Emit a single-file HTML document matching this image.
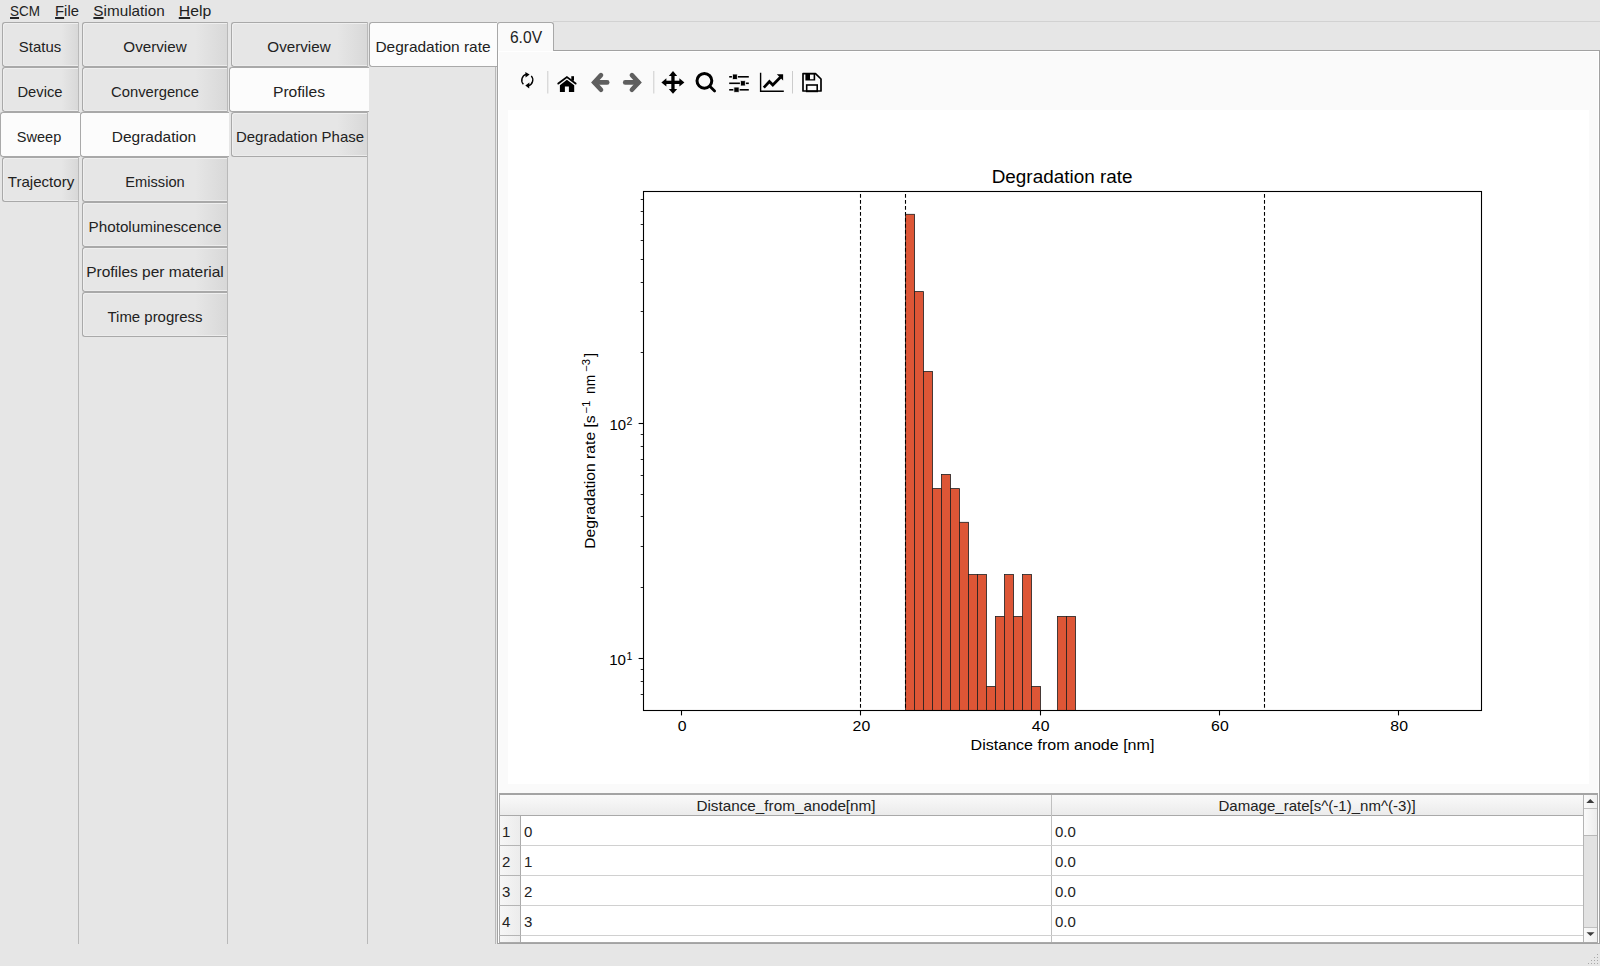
<!DOCTYPE html>
<html><head><meta charset="utf-8">
<style>
*{box-sizing:border-box;margin:0;padding:0}
html,body{width:1600px;height:966px;overflow:hidden;background:#e6e6e6;font-family:"Liberation Sans",sans-serif;color:#222}
.a{position:absolute}
.menu{top:0;left:0;width:1600px;height:22px;font-size:15.5px}
.menu u{text-decoration:underline;text-decoration-thickness:1.5px;text-underline-offset:1px}
.vline{position:absolute;width:1px;background:#b9b9b9}
.tab{position:absolute;height:45px;border:1px solid #a9a9a9;border-right:none;border-radius:3px 0 0 3px;
 background:linear-gradient(to right,#e6e6e6 0%,#e6e6e6 78%,#d8d8d8 100%);
 box-shadow:inset 1px 1px 0 #efefef, inset 0 -1px 0 #ececec}
.lbl{position:absolute;font-size:15px;line-height:15px;white-space:nowrap;transform-origin:50% 50%}
.tab.sel{background:#fcfcfc;box-shadow:none}
</style></head><body>
<div class="a menu">
 <div class="lbl" style="left:25.25px;top:3.3px;transform:translateX(-50%) scaleX(0.8984)"><u>S</u>CM</div>
 <div class="lbl" style="left:67px;top:3.3px;transform:translateX(-50%) scaleX(0.9856)"><u>F</u>ile</div>
 <div class="lbl" style="left:128.95px;top:3.3px;transform:translateX(-50%) scaleX(1.0173)"><u>S</u>imulation</div>
 <div class="lbl" style="left:195px;top:3.3px;transform:translateX(-50%) scaleX(1.0506)"><u>H</u>elp</div>
</div>

<!-- column pane borders -->
<div class="vline" style="left:78px;top:22px;height:922px"></div>
<div class="vline" style="left:227px;top:22px;height:922px"></div>
<div class="vline" style="left:367px;top:22px;height:922px"></div>
<div class="vline" style="left:495px;top:66px;height:878px"></div>
<div class="vline" style="left:495px;top:23px;height:43px;background:#e2e2e2"></div>

<!-- tabs -->
<div class="tab" style="left:2px;top:22px;width:76px"></div>
<div class="lbl" style="left:40.00px;top:39.2px;transform:translateX(-50%) scaleX(0.9947)">Status</div>
<div class="tab" style="left:2px;top:67px;width:76px"></div>
<div class="lbl" style="left:40.10px;top:84.2px;transform:translateX(-50%) scaleX(0.983)">Device</div>
<div class="tab" style="left:2px;top:157px;width:76px"></div>
<div class="lbl" style="left:41.00px;top:174.2px;transform:translateX(-50%) scaleX(1.0057)">Trajectory</div>
<div class="tab" style="left:82px;top:22px;width:145px"></div>
<div class="lbl" style="left:155.00px;top:39.2px;transform:translateX(-50%) scaleX(1.0131)">Overview</div>
<div class="tab" style="left:82px;top:67px;width:145px"></div>
<div class="lbl" style="left:155.00px;top:84.2px;transform:translateX(-50%) scaleX(0.9845)">Convergence</div>
<div class="tab" style="left:82px;top:157px;width:145px"></div>
<div class="lbl" style="left:155.25px;top:174.2px;transform:translateX(-50%) scaleX(0.9747)">Emission</div>
<div class="tab" style="left:82px;top:202px;width:145px"></div>
<div class="lbl" style="left:155.00px;top:219.2px;transform:translateX(-50%) scaleX(1.0149)">Photoluminescence</div>
<div class="tab" style="left:82px;top:247px;width:145px"></div>
<div class="lbl" style="left:155.10px;top:264.2px;transform:translateX(-50%) scaleX(1.0318)">Profiles per material</div>
<div class="tab" style="left:82px;top:292px;width:145px"></div>
<div class="lbl" style="left:154.75px;top:309.2px;transform:translateX(-50%) scaleX(0.9968)">Time progress</div>
<div class="tab" style="left:231px;top:22px;width:136px"></div>
<div class="lbl" style="left:299.00px;top:39.2px;transform:translateX(-50%) scaleX(1.0131)">Overview</div>
<div class="tab" style="left:231px;top:112px;width:136px"></div>
<div class="lbl" style="left:299.60px;top:129.2px;transform:translateX(-50%) scaleX(0.9974)">Degradation Phase</div>
<div class="tab sel" style="left:0px;top:112px;width:80px"></div>
<div class="lbl" style="left:38.95px;top:129.2px;transform:translateX(-50%) scaleX(0.9688)">Sweep</div>
<div class="tab sel" style="left:80px;top:112px;width:149px"></div>
<div class="lbl" style="left:154.00px;top:129.2px;transform:translateX(-50%) scaleX(1.0326)">Degradation</div>
<div class="tab sel" style="left:229px;top:67px;width:140px"></div>
<div class="lbl" style="left:298.50px;top:84.2px;transform:translateX(-50%) scaleX(1.0409)">Profiles</div>
<div class="tab sel" style="left:369px;top:22px;width:128px"></div>
<div class="lbl" style="left:432.60px;top:39.2px;transform:translateX(-50%) scaleX(1.0308)">Degradation rate</div>

<!-- 6.0V tab widget -->
<div class="a" style="left:553px;top:21px;width:1047px;height:1px;background:#d2d2d2"></div>
<div class="a" id="pane" style="left:497px;top:50px;width:1103px;height:894px;background:#fafafa;border:1px solid #a2a2a2;box-shadow:inset 1px 1px 0 #fff, inset -1px 0 0 #fff"></div>
<div class="a" style="left:497px;top:22px;width:57px;height:29px;background:#fafafa;border:1px solid #a8a8a8;border-bottom:none;border-radius:3px 3px 0 0"></div>
<div class="lbl" style="left:525.6px;top:29.6px;font-size:16.8px;transform:translateX(-50%) scaleX(0.93)">6.0V</div>


<!-- toolbar -->
<svg class="a" style="left:0;top:0" width="1600" height="110" viewBox="0 0 1600 110">
<g fill="none" stroke="#000" stroke-width="1.4">
 <path d="M523.4 84.3 A5.6 5.9 0 0 1 526.2 74.4"/>
 <path d="M531.3 75.9 A5.6 5.9 0 0 1 528.6 85.6"/>
</g>
<path d="M525.3 71.9 L529.6 74.6 L525.6 77.6 Z" fill="#000"/>
<path d="M529.4 82.6 L525.3 85.6 L529.2 88.4 Z" fill="#000"/>
<rect x="547.3" y="71" width="1" height="22.5" fill="#cccccc"/>
<rect x="653.3" y="71" width="1" height="22.5" fill="#cccccc"/>
<rect x="792" y="71" width="1" height="22.5" fill="#cccccc"/>
<!-- home -->
<polyline points="558.3,83.6 566.9,77.1 575.6,83.6" fill="none" stroke="#000" stroke-width="1.9" stroke-linecap="round" stroke-linejoin="miter"/>
<rect x="571.3" y="76.2" width="2.7" height="4.5" fill="#000"/>
<path d="M559.9 85.2 L566.9 79.8 L574.2 85.2 L574.2 91.9 L568.9 91.9 L568.9 86.6 L564.9 86.6 L564.9 91.9 L559.9 91.9 Z" fill="#000"/>
<!-- back / forward -->
<g fill="none" stroke="#5f5f5f" stroke-width="4.6" stroke-linecap="round" stroke-linejoin="miter">
 <polyline points="601,75.1 594.2,82.4 601,89.8"/>
 <line x1="595" y1="82.4" x2="607.2" y2="82.4"/>
 <polyline points="631.9,75.1 638.7,82.4 631.9,89.8"/>
 <line x1="625.2" y1="82.4" x2="638" y2="82.4"/>
</g>
<!-- move -->
<g fill="#000">
 <rect x="671.3" y="75" width="3.3" height="15"/>
 <rect x="665" y="80.7" width="16" height="3.3"/>
 <path d="M673 71 L677.2 75.9 L668.8 75.9 Z"/>
 <path d="M673 93.8 L677.2 88.9 L668.8 88.9 Z"/>
 <path d="M661.4 82.4 L666.4 78.2 L666.4 86.6 Z"/>
 <path d="M684.4 82.4 L679.4 78.2 L679.4 86.6 Z"/>
</g>
<!-- zoom -->
<circle cx="704.4" cy="80.8" r="7.4" fill="none" stroke="#000" stroke-width="3"/>
<line x1="709.8" y1="86.3" x2="714.6" y2="91.1" stroke="#000" stroke-width="2.8" stroke-linecap="round"/>
<!-- sliders -->
<g stroke="#000" stroke-width="1.6">
 <line x1="729.2" y1="76.8" x2="748.8" y2="76.8"/>
 <line x1="729.2" y1="83.3" x2="748.8" y2="83.3"/>
 <line x1="729.2" y1="89.8" x2="748.8" y2="89.8"/>
</g>
<g fill="#000" stroke="#fafafa" stroke-width="0.9">
 <rect x="732.4" y="74" width="5" height="5.6" rx="0.8"/>
 <rect x="740.4" y="80.6" width="5" height="5.4" rx="0.8"/>
 <rect x="733.8" y="87" width="5.4" height="5.4" rx="0.8"/>
</g>
<!-- customize chart -->
<polyline points="760.6,72.8 760.6,91.3 783.8,91.3" fill="none" stroke="#000" stroke-width="1.4"/>
<polyline points="763.8,87.6 769.4,81.6 772.8,85 780.4,77.3" fill="none" stroke="#000" stroke-width="2.8" stroke-linejoin="miter"/>
<path d="M776.8 74.3 L783.1 74.3 L783.1 80.6 Z" fill="#000"/>
<!-- save -->
<path d="M803 73.7 L815.5 73.7 L821 79 L821 91 L803 91 Z" fill="none" stroke="#000" stroke-width="1.7" stroke-linejoin="round"/>
<path d="M805.4 73 L815.2 73 L815.2 80.6 L805.4 80.6 Z M810 74.3 L810 79.2 L813.6 79.2 L813.6 74.3 Z" fill="#000" fill-rule="evenodd"/>
<rect x="806.7" y="85" width="10.5" height="6.4" fill="none" stroke="#000" stroke-width="1.6"/>
</svg>

<!-- canvas -->
<svg class="a" style="left:0;top:0" width="1600" height="966" viewBox="0 0 1600 966">
<defs><clipPath id="ax"><rect x="643.5" y="191.4" width="838" height="519"/></clipPath></defs>
<style>
.tk{font-family:"Liberation Sans",sans-serif;font-size:14px;fill:#000}
.lb{font-family:"Liberation Sans",sans-serif;font-size:14.5px;fill:#000}
.sp{font-family:"Liberation Sans",sans-serif;font-size:10.6px;fill:#000}
</style>
<rect x="508" y="110" width="1081" height="674" fill="#fff"/>
<g clip-path="url(#ax)">
<rect x="905.50" y="214.30" width="9.00" height="498.20" fill="#dd5636" stroke="#1e1e1e" stroke-width="0.8"/>
<rect x="914.50" y="291.60" width="9.00" height="420.90" fill="#dd5636" stroke="#1e1e1e" stroke-width="0.8"/>
<rect x="923.50" y="371.50" width="9.00" height="341.00" fill="#dd5636" stroke="#1e1e1e" stroke-width="0.8"/>
<rect x="932.50" y="488.60" width="9.00" height="223.90" fill="#dd5636" stroke="#1e1e1e" stroke-width="0.8"/>
<rect x="941.50" y="474.50" width="9.00" height="238.00" fill="#dd5636" stroke="#1e1e1e" stroke-width="0.8"/>
<rect x="950.50" y="488.60" width="9.00" height="223.90" fill="#dd5636" stroke="#1e1e1e" stroke-width="0.8"/>
<rect x="959.50" y="522.30" width="9.00" height="190.20" fill="#dd5636" stroke="#1e1e1e" stroke-width="0.8"/>
<rect x="968.50" y="574.60" width="9.00" height="137.90" fill="#dd5636" stroke="#1e1e1e" stroke-width="0.8"/>
<rect x="977.50" y="574.60" width="9.00" height="137.90" fill="#dd5636" stroke="#1e1e1e" stroke-width="0.8"/>
<rect x="986.50" y="686.50" width="9.00" height="26.00" fill="#dd5636" stroke="#1e1e1e" stroke-width="0.8"/>
<rect x="995.50" y="616.50" width="9.00" height="96.00" fill="#dd5636" stroke="#1e1e1e" stroke-width="0.8"/>
<rect x="1004.50" y="574.60" width="9.00" height="137.90" fill="#dd5636" stroke="#1e1e1e" stroke-width="0.8"/>
<rect x="1013.50" y="616.50" width="9.00" height="96.00" fill="#dd5636" stroke="#1e1e1e" stroke-width="0.8"/>
<rect x="1022.50" y="574.60" width="9.00" height="137.90" fill="#dd5636" stroke="#1e1e1e" stroke-width="0.8"/>
<rect x="1031.50" y="686.50" width="9.00" height="26.00" fill="#dd5636" stroke="#1e1e1e" stroke-width="0.8"/>
<rect x="1057.50" y="616.50" width="9.00" height="96.00" fill="#dd5636" stroke="#1e1e1e" stroke-width="0.8"/>
<rect x="1066.50" y="616.50" width="9.00" height="96.00" fill="#dd5636" stroke="#1e1e1e" stroke-width="0.8"/>
<line x1="860.50" y1="191.5" x2="860.50" y2="710.5" stroke="#000" stroke-width="1.1" stroke-dasharray="3.9 2.1" stroke-dashoffset="-2.4"/>
<line x1="905.50" y1="191.5" x2="905.50" y2="710.5" stroke="#000" stroke-width="1.1" stroke-dasharray="3.9 2.1" stroke-dashoffset="-2.4"/>
<line x1="1264.50" y1="191.5" x2="1264.50" y2="710.5" stroke="#000" stroke-width="1.1" stroke-dasharray="3.9 2.1" stroke-dashoffset="-2.4"/>
</g>
<rect x="643.5" y="191.5" width="838.0" height="519.0" fill="none" stroke="#000" stroke-width="1.1"/>
<line x1="681.50" y1="710.5" x2="681.50" y2="715.40" stroke="#000" stroke-width="1.1"/>
<text x="677.75" y="730.9" class="tk" textLength="8.8" lengthAdjust="spacingAndGlyphs">0</text>
<line x1="860.50" y1="710.5" x2="860.50" y2="715.40" stroke="#000" stroke-width="1.1"/>
<text x="852.60" y="730.9" class="tk" textLength="17.6" lengthAdjust="spacingAndGlyphs">20</text>
<line x1="1040.50" y1="710.5" x2="1040.50" y2="715.40" stroke="#000" stroke-width="1.1"/>
<text x="1031.85" y="730.9" class="tk" textLength="17.6" lengthAdjust="spacingAndGlyphs">40</text>
<line x1="1219.50" y1="710.5" x2="1219.50" y2="715.40" stroke="#000" stroke-width="1.1"/>
<text x="1211.11" y="730.9" class="tk" textLength="17.6" lengthAdjust="spacingAndGlyphs">60</text>
<line x1="1398.50" y1="710.5" x2="1398.50" y2="715.40" stroke="#000" stroke-width="1.1"/>
<text x="1390.36" y="730.9" class="tk" textLength="17.6" lengthAdjust="spacingAndGlyphs">80</text>
<line x1="638.60" y1="658.50" x2="643.5" y2="658.50" stroke="#000" stroke-width="1.1"/>
<line x1="638.60" y1="423.50" x2="643.5" y2="423.50" stroke="#000" stroke-width="1.1"/>
<line x1="640.70" y1="694.50" x2="643.5" y2="694.50" stroke="#000" stroke-width="0.85"/>
<line x1="640.70" y1="681.50" x2="643.5" y2="681.50" stroke="#000" stroke-width="0.85"/>
<line x1="640.70" y1="669.50" x2="643.5" y2="669.50" stroke="#000" stroke-width="0.85"/>
<line x1="640.70" y1="587.50" x2="643.5" y2="587.50" stroke="#000" stroke-width="0.85"/>
<line x1="640.70" y1="546.50" x2="643.5" y2="546.50" stroke="#000" stroke-width="0.85"/>
<line x1="640.70" y1="516.50" x2="643.5" y2="516.50" stroke="#000" stroke-width="0.85"/>
<line x1="640.70" y1="494.50" x2="643.5" y2="494.50" stroke="#000" stroke-width="0.85"/>
<line x1="640.70" y1="475.50" x2="643.5" y2="475.50" stroke="#000" stroke-width="0.85"/>
<line x1="640.70" y1="459.50" x2="643.5" y2="459.50" stroke="#000" stroke-width="0.85"/>
<line x1="640.70" y1="446.50" x2="643.5" y2="446.50" stroke="#000" stroke-width="0.85"/>
<line x1="640.70" y1="434.50" x2="643.5" y2="434.50" stroke="#000" stroke-width="0.85"/>
<line x1="640.70" y1="352.50" x2="643.5" y2="352.50" stroke="#000" stroke-width="0.85"/>
<line x1="640.70" y1="311.50" x2="643.5" y2="311.50" stroke="#000" stroke-width="0.85"/>
<line x1="640.70" y1="282.50" x2="643.5" y2="282.50" stroke="#000" stroke-width="0.85"/>
<line x1="640.70" y1="259.50" x2="643.5" y2="259.50" stroke="#000" stroke-width="0.85"/>
<line x1="640.70" y1="240.50" x2="643.5" y2="240.50" stroke="#000" stroke-width="0.85"/>
<line x1="640.70" y1="224.50" x2="643.5" y2="224.50" stroke="#000" stroke-width="0.85"/>
<line x1="640.70" y1="211.50" x2="643.5" y2="211.50" stroke="#000" stroke-width="0.85"/>
<line x1="640.70" y1="199.50" x2="643.5" y2="199.50" stroke="#000" stroke-width="0.85"/>
<text x="1062.1" y="182.8" textLength="140.8" lengthAdjust="spacingAndGlyphs" style="font-family:'Liberation Sans',sans-serif;font-size:17.5px;fill:#000" text-anchor="middle">Degradation rate</text>
<text x="970.6" y="750" textLength="183.8" lengthAdjust="spacingAndGlyphs" class="lb">Distance from anode [nm]</text>
<text x="609.4" y="429.8" textLength="16.6" lengthAdjust="spacingAndGlyphs" class="tk">10</text>
<text x="626.5" y="424.8" class="sp">2</text>
<text x="609.2" y="665" textLength="16.8" lengthAdjust="spacingAndGlyphs" class="tk">10</text>
<text x="626.5" y="659.7" class="sp">1</text>
<g transform="rotate(-90)">
<text x="-548.8" y="594.9" textLength="133.5" lengthAdjust="spacingAndGlyphs" class="lb">Degradation rate [s</text>
<text x="-413.8" y="590" textLength="13.2" lengthAdjust="spacingAndGlyphs" class="sp">&#8722;1</text>
<text x="-393.9" y="594.9" textLength="19.1" lengthAdjust="spacingAndGlyphs" class="lb">nm</text>
<text x="-371.9" y="590" textLength="12.9" lengthAdjust="spacingAndGlyphs" class="sp">&#8722;3</text>
<text x="-357" y="594.9" class="lb">]</text>
</g>
</svg>



<!-- table -->
<div class="a" style="left:499px;top:793px;width:1099px;height:150px;border:1px solid #a9a9a9;border-top:2px solid #a4a4a4;background:#fff"></div>
<div class="a" style="left:500px;top:795px;width:1083px;height:21px;background:linear-gradient(#fafafa,#ebebeb);border-bottom:1px solid #a9a9a9"></div>
<div class="a" style="left:1051px;top:795px;width:1px;height:147px;background:#c0c0c0"></div>
<div class="a" style="left:500px;top:816px;width:21px;height:126px;background:linear-gradient(to right,#f6f6f6,#ececec);border-right:1px solid #ababab"></div>
<div class="a" style="left:499px;top:845px;width:1084px;height:1px;background:#d0d0d0"></div>
<div class="a" style="left:499px;top:875px;width:1084px;height:1px;background:#d0d0d0"></div>
<div class="a" style="left:499px;top:905px;width:1084px;height:1px;background:#d0d0d0"></div>
<div class="a" style="left:499px;top:935px;width:1084px;height:1px;background:#d0d0d0"></div>
<div class="a" style="left:499px;top:845px;width:22px;height:1px;background:#b4b4b4"></div>
<div class="a" style="left:499px;top:875px;width:22px;height:1px;background:#b4b4b4"></div>
<div class="a" style="left:499px;top:905px;width:22px;height:1px;background:#b4b4b4"></div>
<div class="a" style="left:499px;top:935px;width:22px;height:1px;background:#b4b4b4"></div>
<div class="lbl" style="left:786.1px;top:798.2px;transform:translateX(-50%) scaleX(1.0185)">Distance_from_anode[nm]</div>
<div class="lbl" style="left:1317.2px;top:798.2px;transform:translateX(-50%) scaleX(1.0027)">Damage_rate[s^(-1)_nm^(-3)]</div>
<div class="lbl" style="left:502px;top:824.1px">1</div>
<div class="lbl" style="left:502px;top:854.1px">2</div>
<div class="lbl" style="left:502px;top:884.1px">3</div>
<div class="lbl" style="left:502px;top:914.1px">4</div>
<div class="lbl" style="left:524px;top:824.1px">0</div>
<div class="lbl" style="left:524px;top:854.1px">1</div>
<div class="lbl" style="left:524px;top:884.1px">2</div>
<div class="lbl" style="left:524px;top:914.1px">3</div>
<div class="lbl" style="left:1055px;top:824.1px">0.0</div>
<div class="lbl" style="left:1055px;top:854.1px">0.0</div>
<div class="lbl" style="left:1055px;top:884.1px">0.0</div>
<div class="lbl" style="left:1055px;top:914.1px">0.0</div>
<!-- scrollbar -->
<div class="a" style="left:1583px;top:795px;width:14px;height:147px;background:#e2e2e2;border-left:1px solid #b4b4b4"></div>
<div class="a" style="left:1584px;top:795px;width:13px;height:14px;background:linear-gradient(to right,#fafafa,#f0f0f0);border-bottom:1px solid #c0c0c0"></div>
<div class="a" style="left:1584px;top:809px;width:13px;height:27px;background:linear-gradient(to right,#fafafa,#ececec);border-bottom:1px solid #b8b8b8"></div>
<div class="a" style="left:1584px;top:927px;width:13px;height:15px;background:linear-gradient(to right,#fafafa,#f0f0f0);border-top:1px solid #c0c0c0"></div>
<svg class="a" style="left:1584px;top:795px" width="14" height="147" viewBox="0 0 14 147">
 <path d="M2.3 8 L6.3 4 L10.3 8 Z" fill="#3c3c3c"/>
 <path d="M2.5 137.2 L6.5 141 L10.5 137.2 Z" fill="#3c3c3c"/>
</svg>

<svg class="a" style="left:0;top:0" width="1600" height="966" viewBox="0 0 1600 966"><rect x="1597.0" y="954.0" width="1" height="1" fill="#a8a8a8"/><rect x="1594.0" y="957.0" width="1" height="1" fill="#a8a8a8"/><rect x="1597.0" y="957.0" width="1" height="1" fill="#a8a8a8"/><rect x="1591.0" y="960.0" width="1" height="1" fill="#a8a8a8"/><rect x="1594.0" y="960.0" width="1" height="1" fill="#a8a8a8"/><rect x="1597.0" y="960.0" width="1" height="1" fill="#a8a8a8"/><rect x="1588.0" y="963.0" width="1" height="1" fill="#a8a8a8"/><rect x="1591.0" y="963.0" width="1" height="1" fill="#a8a8a8"/><rect x="1594.0" y="963.0" width="1" height="1" fill="#a8a8a8"/><rect x="1597.0" y="963.0" width="1" height="1" fill="#a8a8a8"/></svg>
</body></html>
